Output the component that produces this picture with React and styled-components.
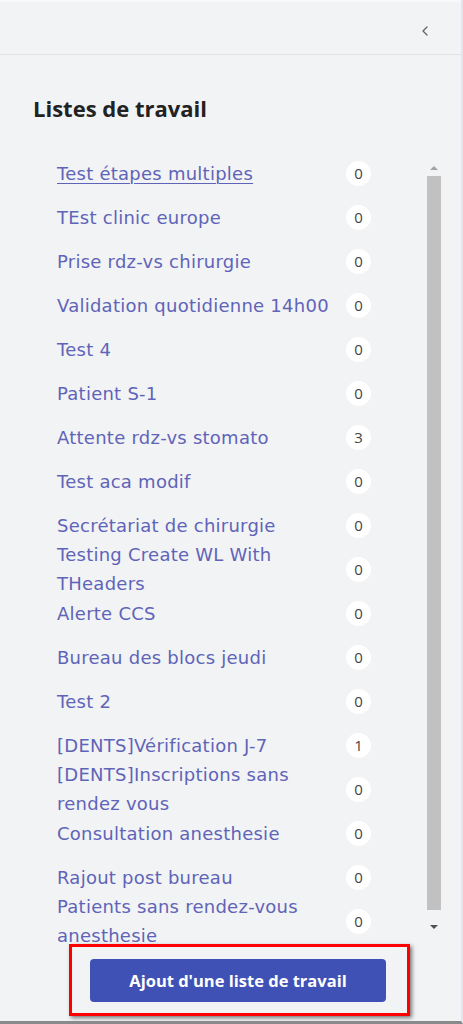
import React from "react";
import styled, { createGlobalStyle } from "styled-components";
import { ChevronLeft } from "lucide-react";

const worklists = [
  { name: "Test étapes multiples", count: 0, active: true },
  { name: "TEst clinic europe", count: 0 },
  { name: "Prise rdz-vs chirurgie", count: 0 },
  { name: "Validation quotidienne 14h00", count: 0 },
  { name: "Test 4", count: 0 },
  { name: "Patient S-1", count: 0 },
  { name: "Attente rdz-vs stomato", count: 3 },
  { name: "Test aca modif", count: 0 },
  { name: "Secrétariat de chirurgie", count: 0 },
  { name: "Testing Create WL With THeaders", count: 0 },
  { name: "Alerte CCS", count: 0 },
  { name: "Bureau des blocs jeudi", count: 0 },
  { name: "Test 2", count: 0 },
  { name: "[DENTS]Vérification J-7", count: 1 },
  { name: "[DENTS]Inscriptions sans rendez vous", count: 0 },
  { name: "Consultation anesthesie", count: 0 },
  { name: "Rajout post bureau", count: 0 },
  { name: "Patients sans rendez-vous anesthesie", count: 0 },
];

export const App = () => {
  return (
    <>
      <GlobalStyle />
      <StyledPanel>
        <StyledHeader>
          <StyledCollapseButton aria-label="Réduire">
            <ChevronLeft size={16} strokeWidth={2} />
          </StyledCollapseButton>
        </StyledHeader>
        <StyledTitle>Listes de travail</StyledTitle>
        <StyledListArea>
          <StyledList>
            {worklists.map((item) => (
              <StyledRow key={item.name}>
                <StyledName $active={item.active}>{item.name}</StyledName>
                <StyledBadge>{item.count}</StyledBadge>
              </StyledRow>
            ))}
          </StyledList>
          <StyledScrollbar>
            <StyledArrow $up />
            <StyledThumb />
            <StyledArrow />
          </StyledScrollbar>
        </StyledListArea>
        <StyledHighlight>
          <StyledAddButton>Ajout d'une liste de travail</StyledAddButton>
        </StyledHighlight>
      </StyledPanel>
    </>
  );
};
export default App;

const GlobalStyle = createGlobalStyle`
  body {
    margin: 0;
    background: #f2f3f5;
  }
`;

const StyledPanel = styled.div`
  box-sizing: border-box;
  display: flex;
  flex-direction: column;
  width: 463px;
  height: 1024px;
  background: #f2f3f5;
  border-right: 2px solid #e4e4ec;
  border-bottom: 3px solid #8a8a8a;
  overflow: hidden;
`;

const StyledHeader = styled.div`
  box-sizing: border-box;
  display: flex;
  height: 55px;
  padding: 21px 28px 0 0;
  justify-content: flex-end;
  align-items: flex-start;
  border-top: 2px solid #f8f8fa;
  border-bottom: 1px solid #e1e1e6;
`;

const StyledCollapseButton = styled.button`
  display: flex;
  padding: 0;
  border: none;
  background: none;
  color: #666;
  cursor: pointer;
`;

const StyledTitle = styled.h2`
  margin: 38px 0 0 33px;
  font-family: "Open Sans", sans-serif;
  font-size: 22px;
  font-weight: 700;
  line-height: 30px;
  color: #222;
`;

const StyledListArea = styled.div`
  display: flex;
  height: 793px;
  margin-top: 28px;
`;

const StyledList = styled.div`
  display: flex;
  width: 314px;
  padding-left: 57px;
  flex-direction: column;
`;

const StyledRow = styled.div`
  display: flex;
  height: 44px;
  flex-shrink: 0;
  justify-content: space-between;
  align-items: center;
`;

const StyledName = styled.a`
  max-width: 280px;
  font-family: "DejaVu Sans", sans-serif;
  font-size: 18px;
  letter-spacing: 0.25px;
  line-height: 29px;
  color: #6064b8;
  text-decoration: ${(p) => (p.$active ? "underline" : "none")};
  text-decoration-thickness: 1px;
  text-underline-offset: 3px;
  cursor: pointer;
`;

const StyledBadge = styled.span`
  display: flex;
  width: 25px;
  height: 25px;
  flex-shrink: 0;
  justify-content: center;
  align-items: center;
  border-radius: 50%;
  background: #fff;
  font-family: "Open Sans", sans-serif;
  font-size: 15px;
  color: #444;
`;

const StyledScrollbar = styled.div`
  display: flex;
  width: 14px;
  margin: 11px 0 0 56px;
  flex-direction: column;
  align-items: center;
`;

const StyledArrow = styled.div`
  width: 0;
  height: 0;
  margin: ${(p) => (p.$up ? "4px 0 6px" : "15px 0 0")};
  border-left: 4px solid transparent;
  border-right: 4px solid transparent;
  border-bottom: ${(p) => (p.$up ? "4px solid #a3a3a3" : "none")};
  border-top: ${(p) => (p.$up ? "none" : "4px solid #505050")};
`;

const StyledThumb = styled.div`
  width: 14px;
  height: 734px;
  background: #c1c1c1;
`;

const StyledHighlight = styled.div`
  box-sizing: border-box;
  display: flex;
  width: 341px;
  height: 72px;
  margin-left: 69px;
  padding-left: 18px;
  align-items: center;
  border: 3px solid #f00;
  box-shadow: 2px 2px 4px rgba(0, 0, 0, 0.5);
`;

const StyledAddButton = styled.button`
  width: 296px;
  height: 43px;
  border: none;
  border-radius: 4px;
  background: #3f51b5;
  font-family: "Open Sans", sans-serif;
  font-size: 16.5px;
  font-weight: 700;
  color: #fff;
  cursor: pointer;
`;
